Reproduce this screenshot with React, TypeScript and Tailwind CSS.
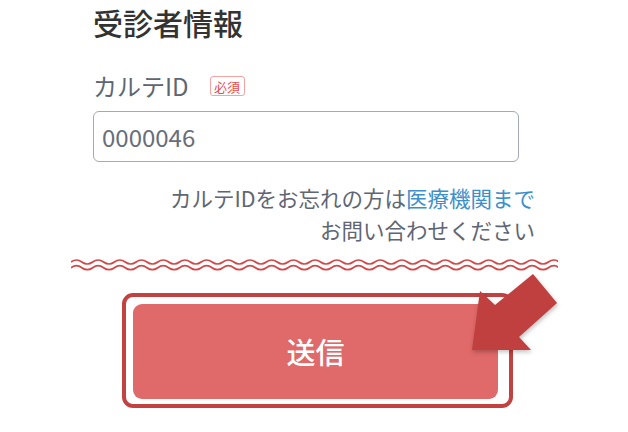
import React from "react";

function wavePath(cy: number, width: number, period: number, amp: number) {
  let d = `M0 ${cy}`;
  const half = period / 2;
  let x = 0;
  let up = true;
  while (x < width) {
    const cx = x + half / 2;
    const ex = x + half;
    d += ` Q${cx.toFixed(2)} ${(up ? cy - amp * 2 : cy + amp * 2).toFixed(2)} ${ex.toFixed(2)} ${cy}`;
    x = ex;
    up = !up;
  }
  return d;
}

const W = 487;
const P1 = wavePath(6, W, 21.7, 2);
const P2 = wavePath(11.7, W, 21.7, 2);

export default function App() {
  return (
    <div className="relative w-[628px] h-[432px] overflow-hidden bg-white font-['Noto_Sans_CJK_JP',sans-serif]">
      <div className="flex flex-col">
        <h1 className="ml-[93px] mt-[7px] text-[30px] leading-[30px] font-medium text-[#333333]">
          受診者情報
        </h1>
        <div className="ml-[93px] mt-[37px] flex items-center h-[24px]">
          <span className="text-[24px] leading-[24px] text-[#5f6673]">カルテID</span>
          <span className="ml-[21px] flex h-[20px] w-[35px] items-center justify-center rounded-[3px] border border-[#f6a3a3] text-[13px] leading-none text-[#ec4a4a]">
            必須
          </span>
        </div>
        <div className="ml-[93px] mt-[13px] flex h-[51px] w-[426px] items-center rounded-[6px] border border-[#a3a9b5] pl-[8px] text-[24px] leading-none text-[#666e7b]">
          0000046
        </div>
        <div className="mt-[20px] ml-[93px] w-[442px] text-right text-[21.5px] leading-[32px] text-[#5f6673]">
          <div>
            カルテIDをお忘れの方は<span className="text-[#3d8fcc]">医療機関まで</span>
          </div>
          <div>お問い合わせください</div>
        </div>
        <svg
          className="ml-[71px] mt-[10px] block"
          width={W}
          height={18}
          viewBox={`0 0 ${W} 18`}
        >
          <path d={P1} fill="none" stroke="#d24848" strokeWidth={1.7} />
          <path d={P2} fill="none" stroke="#d24848" strokeWidth={1.7} />
        </svg>
        <div className="ml-[122px] mt-[19px] w-[391px] h-[115px] rounded-[11px] border-[4px] border-[#c24141] pt-[7px] pl-[7px] pr-[11px] pb-[5px]">
          <button className="flex h-full w-full items-center justify-center rounded-[9px] bg-[#e06969] text-[29px] font-medium text-white">
            送信
          </button>
        </div>
      </div>
      <svg
        className="absolute left-0 top-0 pointer-events-none drop-shadow-[1px_2px_2px_rgba(0,0,0,0.25)]"
        width={628}
        height={432}
        viewBox="0 0 628 432"
      >
        <polygon
          points="472,350 480,291 495,305 533,274 557,303 519,337 531,350"
          fill="#c03f3f"
        />
      </svg>
    </div>
  );
}
